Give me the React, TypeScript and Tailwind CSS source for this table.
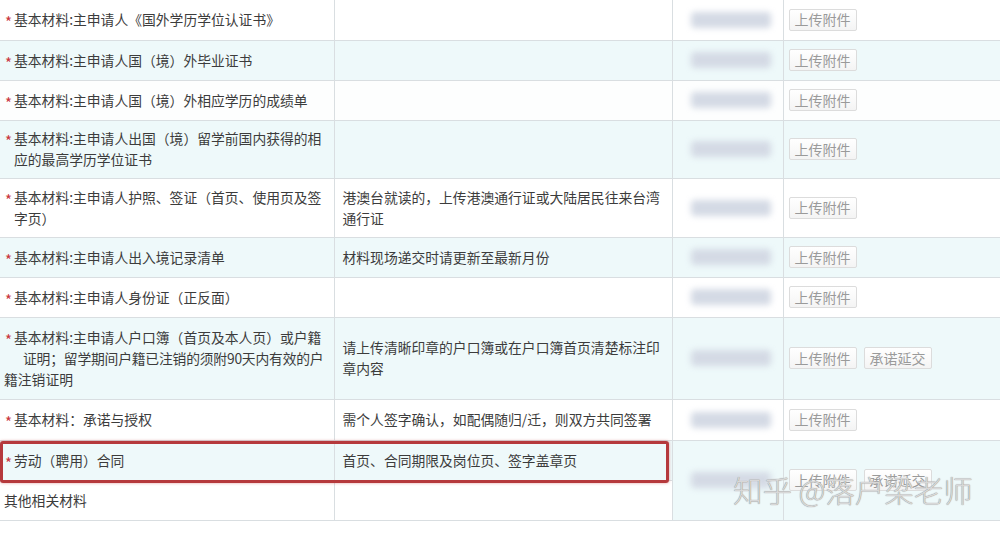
import React from 'react';

type Row = {
  h: string;
  bg: string;
  star?: boolean;
  name: React.ReactNode;
  note?: React.ReactNode;
  promise?: boolean;
};

const rows: Row[] = [
  { h: 'h-[40px]', bg: 'bg-white', star: true, name: '基本材料:主申请人《国外学历学位认证书》' },
  { h: 'h-[40px]', bg: 'bg-[#eef9fa]', star: true, name: '基本材料:主申请人国（境）外毕业证书' },
  { h: 'h-[40px]', bg: 'bg-[#fdfefe]', star: true, name: '基本材料:主申请人国（境）外相应学历的成绩单' },
  {
    h: 'h-[58px]',
    bg: 'bg-[#eef9fa]',
    star: true,
    name: (
      <>
        基本材料:主申请人出国（境）留学前国内获得的相
        <br />
        <span className="pl-[10px]">应的最高学历学位证书</span>
      </>
    ),
  },
  {
    h: 'h-[59px]',
    bg: 'bg-white',
    star: true,
    name: (
      <>
        基本材料:主申请人护照、签证（首页、使用页及签
        <br />
        <span className="pl-[10px]">字页）</span>
      </>
    ),
    note: (
      <>
        港澳台就读的，上传港澳通行证或大陆居民往来台湾
        <br />
        通行证
      </>
    ),
  },
  { h: 'h-[40px]', bg: 'bg-[#eef9fa]', star: true, name: '基本材料:主申请人出入境记录清单', note: '材料现场递交时请更新至最新月份' },
  { h: 'h-[40px]', bg: 'bg-white', star: true, name: '基本材料:主申请人身份证（正反面）' },
  {
    h: 'h-[82px]',
    bg: 'bg-[#eef9fa]',
    star: true,
    name: (
      <>
        基本材料:主申请人户口簿（首页及本人页）或户籍
        <br />
        <span className="pl-[19px] tracking-[-0.2px]">证明；留学期间户籍已注销的须附90天内有效的户</span>
        <br />
        籍注销证明
      </>
    ),
    note: (
      <>
        请上传清晰印章的户口簿或在户口簿首页清楚标注印
        <br />
        章内容
      </>
    ),
    promise: true,
  },
  { h: 'h-[41px]', bg: 'bg-white', star: true, name: '基本材料：承诺与授权', note: '需个人签字确认，如配偶随归/迁，则双方共同签署' },
];

function Blur() {
  return <div className="ml-[18px] h-[16px] w-[80px] rounded-sm bg-[#d4dae5] blur-[3px]" />;
}

function Btn({ label }: { label: string }) {
  return (
    <span className="inline-flex h-[22px] items-center rounded-[2px] border border-[#dcdcdc] bg-gradient-to-b from-white to-[#f4f4f4] px-[5px] text-[14px] text-[#9a9a9a]">
      {label}
    </span>
  );
}

function Star() {
  return <span className="mr-[1px] inline-block w-[9px] translate-y-[3px] text-center text-[15px] leading-[10px] text-[#c9363c]">*</span>;
}

const cell = 'whitespace-nowrap border-b border-r border-[#d9dee1] align-middle';

export default function App() {
  const font = { fontFamily: '"Noto Sans CJK SC", "Noto Sans", sans-serif' };
  return (
    <div className="relative h-[533px] w-[1000px] overflow-hidden bg-white text-[13.8px] leading-[21px] text-[#3c3c3c]" style={font}>
      <table className="w-[1000px] table-fixed border-collapse">
        <colgroup>
          <col className="w-[334px]" />
          <col className="w-[338px]" />
          <col className="w-[111px]" />
          <col className="w-[217px]" />
        </colgroup>
        <tbody>
          {rows.map((r, i) => (
            <tr key={i} className={`${r.h} ${r.bg}`}>
              <td className={`${cell} pl-[4px]`}>
                {r.star && <Star />}
                {r.name}
              </td>
              <td className={`${cell} pl-[8px]`}>{r.note}</td>
              <td className={cell}>
                <Blur />
              </td>
              <td className="border-b border-[#d9dee1] pl-[5px] align-middle">
                <div className="flex gap-[7px]">
                  <Btn label="上传附件" />
                  {r.promise && <Btn label="承诺延交" />}
                </div>
              </td>
            </tr>
          ))}
          <tr className="h-[40px] bg-[#eef9fa]">
            <td className={`${cell} pl-[4px]`}>
              <Star />
              劳动（聘用）合同
            </td>
            <td className={`${cell} pl-[8px]`}>首页、合同期限及岗位页、签字盖章页</td>
            <td rowSpan={2} className={cell}>
              <Blur />
            </td>
            <td rowSpan={2} className="border-b border-[#d9dee1] pl-[5px] align-middle">
              <div className="flex gap-[7px]">
                <Btn label="上传附件" />
                <Btn label="承诺延交" />
              </div>
            </td>
          </tr>
          <tr className="h-[40px] bg-white">
            <td className={`${cell} pl-[4px]`}>其他相关材料</td>
            <td className={cell} />
          </tr>
        </tbody>
      </table>

      <div className="pointer-events-none absolute left-0 top-[441px] h-[42px] w-[669px] rounded-[3px] border-[3px] border-[#b5393c] shadow-[0_0_3px_rgba(200,60,60,0.5)]" />

      <div className="pointer-events-none absolute left-[733px] top-[469px] text-[29.5px] font-light leading-[40px] text-[#d8d8d8] [text-shadow:0_0_1px_#6a6a6a,0_0_2px_#ffffff]">
        知乎 @落户梁老师
      </div>
    </div>
  );
}
